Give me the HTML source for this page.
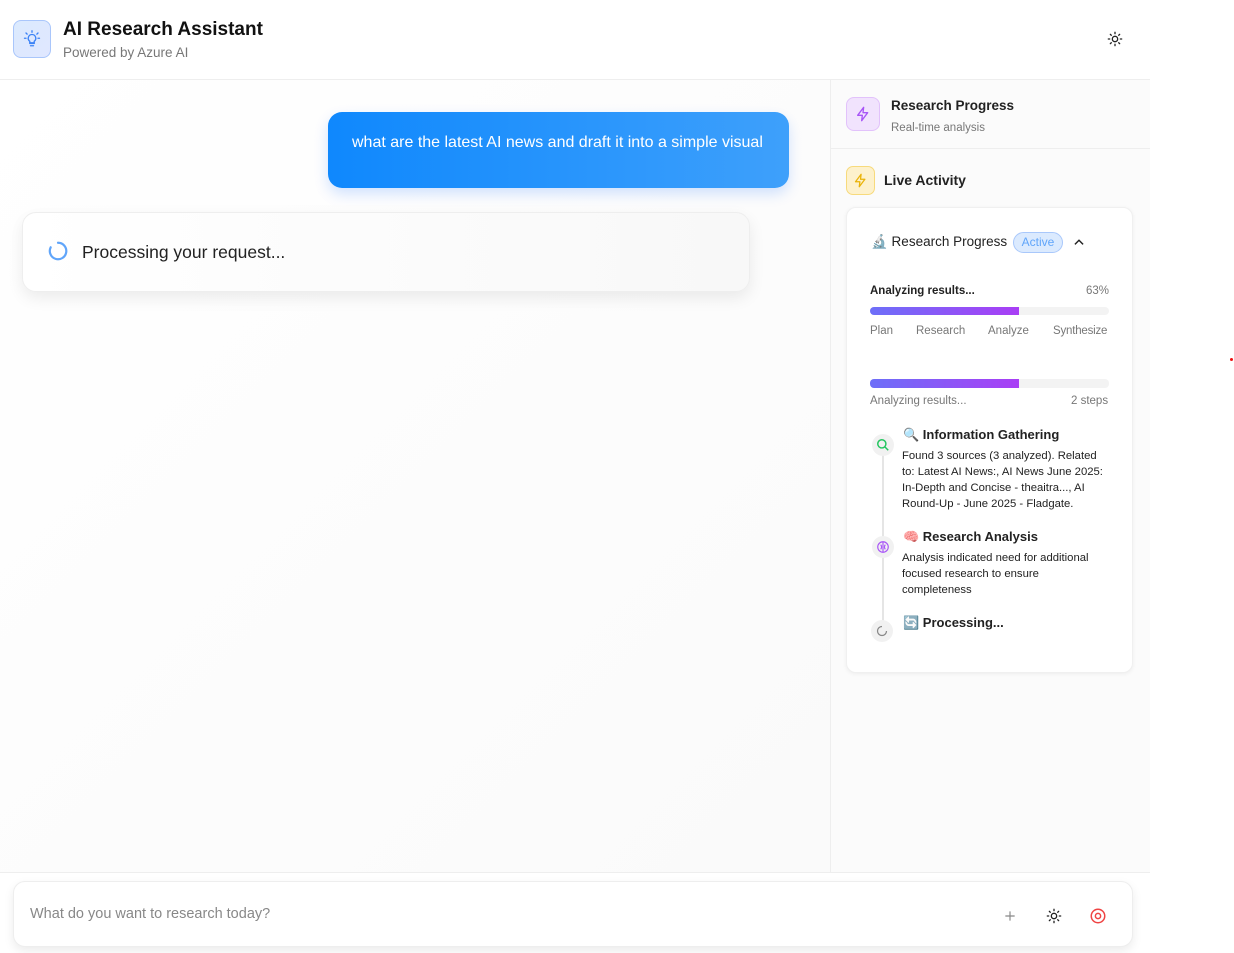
<!DOCTYPE html>
<html><head><meta charset="utf-8"><style>
*{box-sizing:border-box;margin:0;padding:0}
body{width:1234px;height:953px;background:#fff;font-family:"Liberation Sans",sans-serif;position:relative;overflow:hidden;color:#111}
.abs{position:absolute}
.hdr{left:0;top:0;width:1150px;height:80px;border-bottom:1px solid #eee;background:#fff}
.logo{left:13px;top:20px;width:38px;height:38px;border-radius:8px;background:linear-gradient(135deg,#dbeafe,#e0e7ff);border:1px solid #a9c6fb;display:flex;align-items:center;justify-content:center}
.left{left:0;top:80px;width:830px;height:792px;background:linear-gradient(135deg,#fff,#fafafa)}
.right{left:830px;top:80px;width:320px;height:792px;background:#fbfbfb;border-left:1px solid #eee}
.bubble{left:328px;top:112px;width:461px;height:76px;border-radius:14px;background:linear-gradient(90deg,#0f88fd,#3ea0fb);color:#fff;font-size:16px;padding:22px 0 0 24px;box-shadow:0 6px 14px rgba(0,100,255,.18)}
.proc{left:22px;top:212px;width:728px;height:80px;border-radius:14px;background:linear-gradient(90deg,#fff,#f8f8f8);border:1px solid #eee;box-shadow:0 6px 16px rgba(0,0,0,.08);font-size:17.5px;color:#222;padding:29px 0 0 59px}
.card{left:846px;top:207px;width:287px;height:466px;background:#fff;border-radius:10px;border:1px solid #f0f0f0;box-shadow:0 1px 4px rgba(0,0,0,.06)}
.sm{font-size:11.5px;color:#777}
.bar{height:8px;border-radius:4px;background:#f3f3f3;width:239px;left:870px}
.bar i{display:block;height:100%;width:149px;border-radius:4px 0 0 4px;background:linear-gradient(90deg,#6d6ff8,#a93ef5)}
.inp{left:13px;top:881px;width:1120px;height:66px;border-radius:12px;background:#fff;border:1px solid #eee;box-shadow:0 4px 10px rgba(0,0,0,.08)}
.t{font-size:11.3px;color:#222;line-height:16px;white-space:nowrap}
.dot{width:22px;height:22px;border-radius:50%;background:#f1f1f1;display:flex;align-items:center;justify-content:center}
</style></head><body>
<div class="abs hdr"></div>
<div class="abs logo"><svg width="18" height="18" viewBox="0 0 24 24" fill="none" stroke="#3b82f6" stroke-width="1.8" stroke-linecap="round"><path d="M9 18h6M10 21h4M12 6a5 5 0 0 0-3 9v2h6v-2a5 5 0 0 0-3-9z"/><path d="M12 1v2M4 4l1.5 1.5M20 4l-1.5 1.5M2 11h2M20 11h2"/></svg></div>
<div class="abs" style="left:63px;top:19px;font-size:19px;font-weight:bold">AI Research Assistant</div>
<div class="abs" style="left:63px;top:45px;font-size:13.5px;color:#777">Powered by Azure AI</div>
<svg class="abs" style="left:1107px;top:31px" width="16" height="16" viewBox="0 0 24 24" fill="none" stroke="#222" stroke-width="2" stroke-linecap="round"><circle cx="12" cy="12" r="4"/><path d="M12 2v2M12 20v2M2 12h2M20 12h2M5 5l1.4 1.4M17.6 17.6L19 19M5 19l1.4-1.4M17.6 6.4L19 5"/></svg>
<div class="abs left"></div>
<div class="abs right"></div>
<div class="abs" style="left:830px;top:148px;width:320px;border-top:1px solid #eee"></div>
<div class="abs" style="left:0;top:872px;width:1150px;border-top:1px solid #eee"></div>
<div class="abs bubble">what are the latest AI news and draft it into a simple visual</div>
<div class="abs proc">Processing your request...</div>
<svg class="abs" style="left:47px;top:240px" width="22" height="22" viewBox="0 0 24 24" fill="none" stroke="#60a5fa" stroke-width="2.4" stroke-linecap="round"><path d="M12 3a9 9 0 1 1-8 5"/></svg>
<div class="abs" style="left:846px;top:97px;width:34px;height:34px;border-radius:8px;background:#f1e3fd;border:1px solid #e2c2fb;display:flex;align-items:center;justify-content:center"><svg width="16" height="16" viewBox="0 0 24 24" fill="none" stroke="#a855f7" stroke-width="2" stroke-linejoin="round"><path d="M13 2L4 14h7l-1 8 9-12h-7z"/></svg></div>
<div class="abs" style="left:891px;top:98px;font-size:13.5px;font-weight:bold;color:#222">Research Progress</div>
<div class="abs" style="left:891px;top:118px" ><span class="sm">Real-time analysis</span></div>
<div class="abs" style="left:846px;top:166px;width:29px;height:29px;border-radius:7px;background:#fdf1cc;border:1px solid #f7da7c;display:flex;align-items:center;justify-content:center"><svg width="15" height="15" viewBox="0 0 24 24" fill="none" stroke="#eab308" stroke-width="2" stroke-linejoin="round"><path d="M13 2L4 14h7l-1 8 9-12h-7z"/></svg></div>
<div class="abs" style="left:884px;top:172px;font-size:14px;font-weight:bold;color:#222">Live Activity</div>
<div class="abs card"></div>
<div class="abs" style="left:871px;top:234px;font-size:13.5px;color:#222">🔬 Research Progress</div>
<div class="abs" style="left:1013px;top:232px;width:50px;height:21px;border-radius:11px;background:#dbeafe;border:1px solid #a9c8fb;color:#60a5fa;font-size:12px;text-align:center;line-height:19px">Active</div>
<svg class="abs" style="left:1072px;top:236px" width="14" height="12" viewBox="0 0 24 20" fill="none" stroke="#222" stroke-width="2.5"><path d="M5 14l7-7 7 7"/></svg>
<div class="abs" style="left:870px;top:285px;font-size:11.5px;font-weight:bold;color:#222">Analyzing results...</div>
<div class="abs sm" style="left:1086px;top:285px">63%</div>
<div class="abs bar" style="top:307px"><i></i></div>
<div class="abs sm" style="left:870px;top:325px">Plan</div>
<div class="abs sm" style="left:916px;top:325px">Research</div>
<div class="abs sm" style="left:988px;top:325px">Analyze</div>
<div class="abs sm" style="left:1053px;top:325px;letter-spacing:-0.2px">Synthesize</div>
<div class="abs bar" style="top:379px;height:9px"><i></i></div>
<div class="abs sm" style="left:870px;top:395px">Analyzing results...</div>
<div class="abs sm" style="left:1071px;top:395px">2 steps</div>
<div class="abs" style="left:882px;top:455px;width:2px;height:170px;background:#e5e5e5"></div>
<div class="abs dot" style="left:872px;top:434px"><svg width="14" height="14" viewBox="0 0 24 24" fill="none" stroke="#22c55e" stroke-width="2.5"><circle cx="10" cy="10" r="7"/><path d="M15 15l6 6"/></svg></div>
<div class="abs dot" style="left:872px;top:536px"><svg width="14" height="14" viewBox="0 0 24 24" fill="none" stroke="#a855f7" stroke-width="2"><circle cx="12" cy="12" r="9"/><path d="M12 3v18M8 8c2 2 2 6 0 8M16 8c-2 2-2 6 0 8"/></svg></div>
<div class="abs dot" style="left:871px;top:620px"><svg width="12" height="12" viewBox="0 0 24 24" fill="none" stroke="#888" stroke-width="2.5"><path d="M12 3a9 9 0 1 0 9 9"/></svg></div>
<div class="abs" style="left:903px;top:427px;font-size:13px;font-weight:bold;color:#222">🔍 Information Gathering</div>
<div class="abs t" style="left:902px;top:448px">Found 3 sources (3 analyzed). Related<br>to: Latest AI News:, AI News June 2025:<br>In-Depth and Concise - theaitra..., AI<br>Round-Up - June 2025 - Fladgate.</div>
<div class="abs" style="left:903px;top:529px;font-size:13px;font-weight:bold;color:#222">🧠 Research Analysis</div>
<div class="abs t" style="left:902px;top:550px">Analysis indicated need for additional<br>focused research to ensure<br>completeness</div>
<div class="abs" style="left:903px;top:615px;font-size:13px;font-weight:bold;color:#222">🔄 Processing...</div>
<div class="abs inp"></div>
<div class="abs" style="left:30px;top:906px;font-size:14.5px;color:#888">What do you want to research today?</div>
<svg class="abs" style="left:1003px;top:909px" width="14" height="14" viewBox="0 0 24 24" stroke="#888" stroke-width="2"><path d="M12 4v16M4 12h16"/></svg>
<svg class="abs" style="left:1046px;top:908px" width="16" height="16" viewBox="0 0 24 24" fill="none" stroke="#222" stroke-width="2" stroke-linecap="round"><circle cx="12" cy="12" r="4"/><path d="M12 2v2M12 20v2M2 12h2M20 12h2M5 5l1.4 1.4M17.6 17.6L19 19M5 19l1.4-1.4M17.6 6.4L19 5"/></svg>
<svg class="abs" style="left:1089px;top:907px" width="18" height="18" viewBox="0 0 24 24" fill="none" stroke="#ef4444" stroke-width="2"><circle cx="12" cy="12" r="9"/><circle cx="12" cy="12" r="3.5"/></svg>
<div class="abs" style="left:1230px;top:358px;width:3px;height:3px;border-radius:50%;background:#e11"></div>
</body></html>
